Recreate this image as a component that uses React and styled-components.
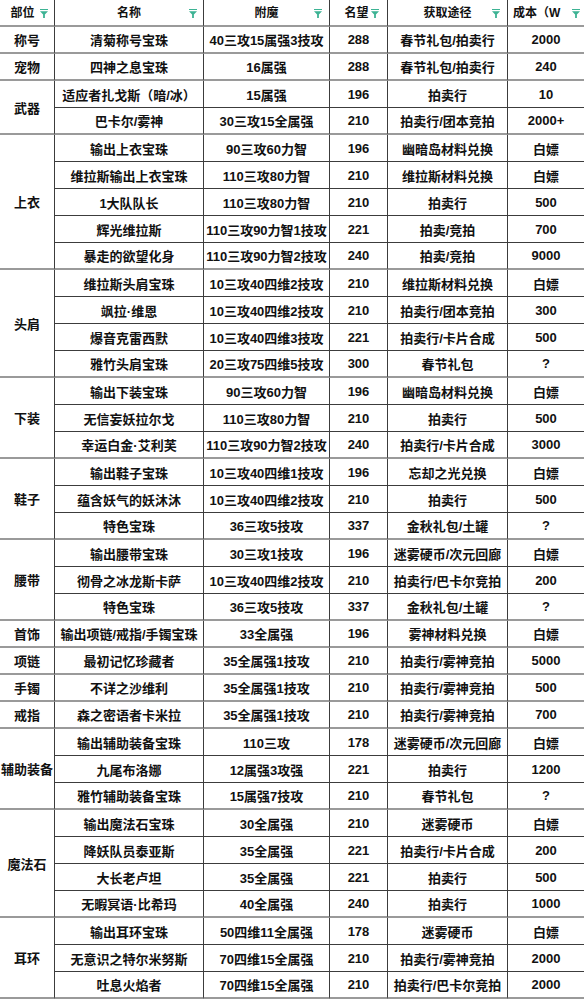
import React from "react";
import styled, { createGlobalStyle } from "styled-components";

const GlobalStyle = createGlobalStyle`
  html, body {
    margin: 0;
    padding: 0;
    background: #fff;
  }
  body {
    font-family: "Liberation Sans", "Noto Sans CJK SC", sans-serif;
    color: #111;
  }
`;

const COLUMNS = "55px 149px 126px 58px 120px 76px";
const DARK_LINE = "1px solid #3c3c3c";
const GROUP_LINE = "2px solid #9a9a9a";

const Sheet = styled.div`
  display: grid;
  grid-template-columns: ${COLUMNS};
  grid-auto-rows: 27px;
  width: 584px;
  background: #fff;
`;

const HeadCell = styled.div`
  position: relative;
  box-sizing: border-box;
  display: flex;
  align-items: center;
  justify-content: ${(props) => (props.$left ? "flex-start" : "center")};
  padding: ${(props) => (props.$left ? "0 0 3px 5px" : "0 0 3px 0")};
  padding-right: ${(props) => (props.$shift ? `${props.$shift}px` : "0")};
  border-right: ${(props) => (props.$last ? "none" : DARK_LINE)};
  border-bottom: ${GROUP_LINE};
  font-size: 12px;
  font-weight: 700;
  white-space: nowrap;
  overflow: hidden;
`;

const FilterIcon = styled.svg`
  position: absolute;
  top: 9px;
  right: ${(props) => props.$right}px;
  width: 8px;
  height: 9px;
`;

const PartCell = styled.div`
  grid-column: 1;
  grid-row: span ${(props) => props.$span};
  box-sizing: border-box;
  display: flex;
  align-items: center;
  justify-content: center;
  border-right: ${DARK_LINE};
  border-bottom: ${GROUP_LINE};
  font-size: 13px;
  font-weight: 700;
  white-space: nowrap;
`;

const Cell = styled.div`
  box-sizing: border-box;
  display: flex;
  align-items: center;
  justify-content: center;
  border-right: ${(props) => (props.$last ? "none" : DARK_LINE)};
  border-bottom: ${(props) => (props.$end ? GROUP_LINE : DARK_LINE)};
  font-size: 13px;
  font-weight: 700;
  white-space: nowrap;
  overflow: hidden;
`;

const Filter = ({ right }) => (
  <FilterIcon $right={right} viewBox="0 0 8 9">
    <rect x="0" y="0" width="8" height="1" fill="#3db394" />
    <path d="M0 2.2 H8 L4.9 5.4 V9 H3.1 V5.4 Z" fill="#3db394" />
  </FilterIcon>
);

const headers = [
  { label: "部位", right: 6, shift: 9 },
  { label: "名称", right: 6 },
  { label: "附魔", right: 7 },
  { label: "名望", right: 8, shift: 4 },
  { label: "获取途径", right: 7 },
  { label: "成本（W", right: 4, left: true },
];

const groups = [
  { part: "称号", rows: [["清菊称号宝珠", "40三攻15属强3技攻", "288", "春节礼包/拍卖行", "2000"]] },
  { part: "宠物", rows: [["四神之息宝珠", "16属强", "288", "春节礼包/拍卖行", "240"]] },
  {
    part: "武器",
    rows: [
      ["适应者扎戈斯（暗/冰）", "15属强", "196", "拍卖行", "10"],
      ["巴卡尔/雾神", "30三攻15全属强", "210", "拍卖行/团本竞拍", "2000+"],
    ],
  },
  {
    part: "上衣",
    rows: [
      ["输出上衣宝珠", "90三攻60力智", "196", "幽暗岛材料兑换", "白嫖"],
      ["维拉斯输出上衣宝珠", "110三攻80力智", "210", "维拉斯材料兑换", "白嫖"],
      ["1大队队长", "110三攻80力智", "210", "拍卖行", "500"],
      ["辉光维拉斯", "110三攻90力智1技攻", "221", "拍卖/竞拍", "700"],
      ["暴走的欲望化身", "110三攻90力智2技攻", "240", "拍卖/竞拍", "9000"],
    ],
  },
  {
    part: "头肩",
    rows: [
      ["维拉斯头肩宝珠", "10三攻40四维2技攻", "210", "维拉斯材料兑换", "白嫖"],
      ["飒拉·维恩", "10三攻40四维2技攻", "210", "拍卖行/团本竞拍", "300"],
      ["爆音克雷西默", "10三攻40四维3技攻", "221", "拍卖行/卡片合成", "500"],
      ["雅竹头肩宝珠", "20三攻75四维5技攻", "300", "春节礼包", "?"],
    ],
  },
  {
    part: "下装",
    rows: [
      ["输出下装宝珠", "90三攻60力智", "196", "幽暗岛材料兑换", "白嫖"],
      ["无信妄妖拉尔戈", "110三攻80力智", "210", "拍卖行", "500"],
      ["幸运白金·艾利芙", "110三攻90力智2技攻", "240", "拍卖行/卡片合成", "3000"],
    ],
  },
  {
    part: "鞋子",
    rows: [
      ["输出鞋子宝珠", "10三攻40四维1技攻", "196", "忘却之光兑换", "白嫖"],
      ["蕴含妖气的妖沐沐", "10三攻40四维2技攻", "210", "拍卖行", "500"],
      ["特色宝珠", "36三攻5技攻", "337", "金秋礼包/土罐", "?"],
    ],
  },
  {
    part: "腰带",
    rows: [
      ["输出腰带宝珠", "30三攻1技攻", "196", "迷雾硬币/次元回廊", "白嫖"],
      ["彻骨之冰龙斯卡萨", "10三攻40四维2技攻", "210", "拍卖行/巴卡尔竞拍", "200"],
      ["特色宝珠", "36三攻5技攻", "337", "金秋礼包/土罐", "?"],
    ],
  },
  { part: "首饰", rows: [["输出项链/戒指/手镯宝珠", "33全属强", "196", "雾神材料兑换", "白嫖"]] },
  { part: "项链", rows: [["最初记忆珍藏者", "35全属强1技攻", "210", "拍卖行/雾神竞拍", "5000"]] },
  { part: "手镯", rows: [["不详之沙维利", "35全属强1技攻", "210", "拍卖行/雾神竞拍", "500"]] },
  { part: "戒指", rows: [["森之密语者卡米拉", "35全属强1技攻", "210", "拍卖行/雾神竞拍", "700"]] },
  {
    part: "辅助装备",
    rows: [
      ["输出辅助装备宝珠", "110三攻", "178", "迷雾硬币/次元回廊", "白嫖"],
      ["九尾布洛娜", "12属强3攻强", "221", "拍卖行", "1200"],
      ["雅竹辅助装备宝珠", "15属强7技攻", "210", "春节礼包", "?"],
    ],
  },
  {
    part: "魔法石",
    rows: [
      ["输出魔法石宝珠", "30全属强", "210", "迷雾硬币", "白嫖"],
      ["降妖队员泰亚斯", "35全属强", "221", "拍卖行/卡片合成", "200"],
      ["大长老卢坦", "35全属强", "221", "拍卖行", "500"],
      ["无暇冥语·比希玛", "40全属强", "240", "拍卖行", "1000"],
    ],
  },
  {
    part: "耳环",
    rows: [
      ["输出耳环宝珠", "50四维11全属强", "178", "迷雾硬币", "白嫖"],
      ["无意识之特尔米努斯", "70四维15全属强", "210", "拍卖行/雾神竞拍", "2000"],
      ["吐息火焰者", "70四维15全属强", "210", "拍卖行/巴卡尔竞拍", "2000"],
    ],
  },
];

const App = () => {
  return (
    <>
      <GlobalStyle />
      <Sheet>
        {headers.map((h, i) => (
          <HeadCell
            key={h.label}
            $left={h.left}
            $shift={h.shift}
            $last={i === headers.length - 1}
          >
            {h.label}
            <Filter right={h.right} />
          </HeadCell>
        ))}

        {groups.map((group) => (
          <React.Fragment key={group.part}>
            <PartCell $span={group.rows.length}>{group.part}</PartCell>
            {group.rows.map((row, r) =>
              row.map((value, c) => (
                <Cell
                  key={`${group.part}-${r}-${c}`}
                  $last={c === row.length - 1}
                  $end={r === group.rows.length - 1}
                >
                  {value}
                </Cell>
              ))
            )}
          </React.Fragment>
        ))}
      </Sheet>
    </>
  );
};

export default App;
